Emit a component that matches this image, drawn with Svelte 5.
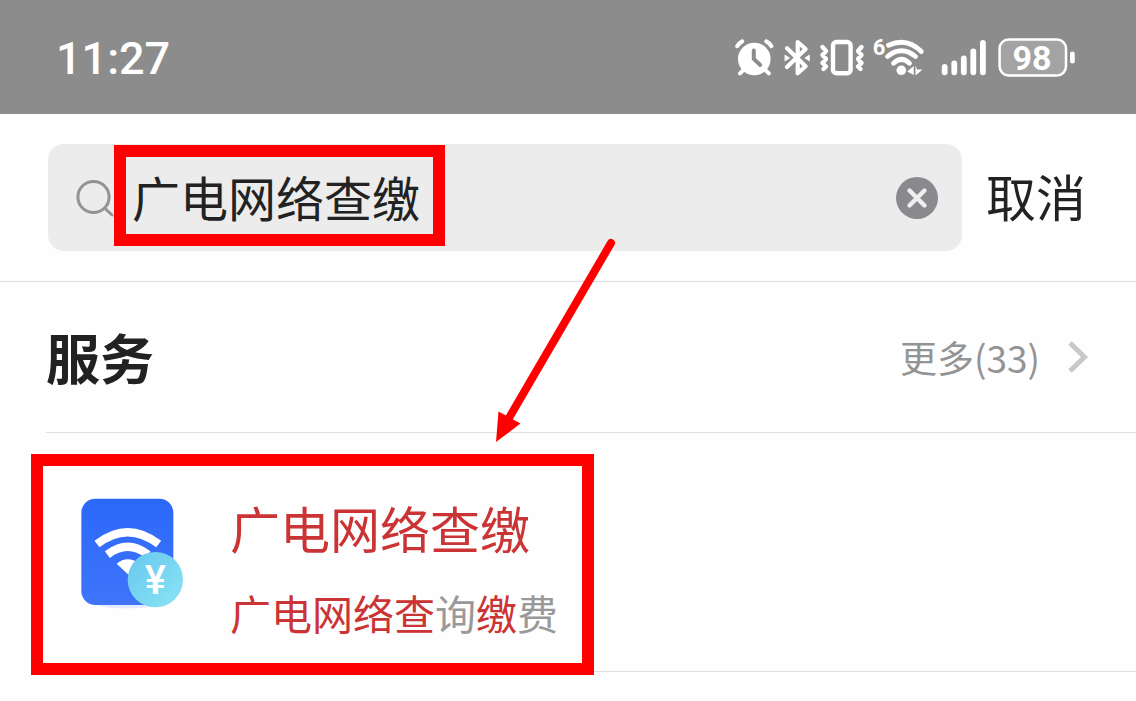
<script>
	let query = '广电网络查缴';
	let searchInput;

	const time = '11:27';
	const battery = 98;
	const total = 33;

	const results = [
		{
			title: [{ text: '广电网络查缴', hit: true }],
			desc: [
				{ text: '广电网络查', hit: true },
				{ text: '询', hit: false },
				{ text: '缴', hit: true },
				{ text: '费', hit: false }
			]
		}
	];

	function clearQuery() {
		query = '';
		searchInput.focus();
	}
</script>

<div class="page">
	<header class="status">
		<time>{time}</time>
		<div class="status-icons">
			<!-- alarm -->
			<svg width="39" height="40" viewBox="0 0 39 40" fill="none" stroke="#fff" stroke-width="4" stroke-linecap="round">
				<circle cx="19.3" cy="22" r="16.3" fill="#fff" stroke="none" />
				<path d="M2.2 9.2Q4 6 7.2 4.4M31.3 4.4Q34.6 6 36.4 9.2M5 36.4l4-4M33.8 36.4l-4-4" />
				<path d="M18.8 13.5V22l6.4 6" stroke="#8c8c8c" />
			</svg>
			<!-- bluetooth -->
			<svg width="26" height="40" viewBox="0 0 26 40" fill="none" stroke="#fff" stroke-width="4.2" stroke-linejoin="round" stroke-linecap="round">
				<path d="M3 11.3l18.6 18-7.9 7V5l7.9 7L3 30" />
				<path d="M.6 17.5v7l5.6-3.5zM25.8 17.5v7l-5.6-3.5z" fill="#fff" stroke="none" />
			</svg>
			<!-- vibrate -->
			<svg width="44" height="40" viewBox="0 0 44 40" fill="none" stroke="#fff" stroke-width="4.4" stroke-linejoin="round" stroke-linecap="round">
				<rect x="13" y="5" width="17.6" height="31.2" rx="3.5" />
				<path d="M2.5 10L6 14l-3.5 4L6 22l-3.5 4L6 29.5 3.5 32M41.5 10L38 14l3.5 4L38 22l3.5 4L38 29.5l2.5 2.5" />
			</svg>
			<!-- wifi 6 -->
			<svg width="50" height="40" viewBox="0 0 50 40" fill="none" stroke="#fff" stroke-width="4.8" stroke-linecap="round">
				<path d="M14.5 8.2Q33 0 47.3 14.5M13.5 19.5Q27.5 8 41.5 19.5M19.5 26.3Q27.5 18.5 35.5 26.3" />
				<circle cx="27.3" cy="33.3" r="4.8" fill="#fff" stroke="none" />
				<path d="M33.2 34.5l6.5-5.5v9zM41.5 38.5v-10l1.5 4h5.5z" fill="#fff" stroke="none" />
				<text x="5" y="18" class="wifi-gen">6</text>
			</svg>
			<!-- signal -->
			<svg width="54" height="40" viewBox="0 0 54 40" fill="#fff">
				<rect x="7.8" y="27" width="5.8" height="11.2" rx="2.9" />
				<rect x="17.4" y="23.6" width="5.8" height="14.6" rx="2.9" />
				<rect x="26.9" y="18.6" width="5.8" height="19.6" rx="2.9" />
				<rect x="36.4" y="11.4" width="5.8" height="26.8" rx="2.9" />
				<rect x="46" y="3" width="5.8" height="35.2" rx="2.9" />
			</svg>
			<!-- battery -->
			<svg width="77" height="40" viewBox="0 0 77 40">
				<rect x="1.6" y="2.4" width="66.4" height="36" rx="9" fill="#a3a3a3" stroke="#fff" stroke-width="2.5" />
				<rect x="72" y="14.6" width="4.8" height="12" rx="2.4" fill="#fff" />
				<text x="34" y="33" class="level">{battery}</text>
			</svg>
		</div>
	</header>

	<form class="search" on:submit|preventDefault>
		<div class="search-box">
			<svg width="38" height="38" viewBox="0 0 38 38" fill="none" stroke="#939393" stroke-width="3" stroke-linecap="round">
				<circle cx="17.5" cy="18" r="15.6" />
				<path d="M29 29.5l7 6.5" />
			</svg>
			<input type="text" aria-label="搜索" bind:this={searchInput} bind:value={query} />
			<button type="button" class="clear" aria-label="清除" on:click={clearQuery}>
				<svg width="42" height="42" viewBox="0 0 42 42">
					<circle cx="21" cy="21" r="21" fill="#8a8a8e" />
					<path d="M13.5 13.5l15 15M28.5 13.5l-15 15" stroke="#efefef" stroke-width="4.4" stroke-linecap="round" />
				</svg>
			</button>
		</div>
		<button type="button" class="cancel">取消</button>
	</form>

	<main>
		<div class="section-head">
			<h2>服务</h2>
			<a class="more" href="#more">
				更多({total})
				<svg width="20" height="32" viewBox="0 0 20 32" fill="none" stroke="#c8c8c8" stroke-width="5">
					<path d="M2 2l14.5 14L2 30" />
				</svg>
			</a>
		</div>

		{#each results as result}
			<a class="result" href="#service">
				<svg width="104" height="114" viewBox="60 50 312 342" fill="none">
					<defs>
						<linearGradient id="tile" x1="0" y1="0" x2="0" y2="1">
							<stop offset="0" stop-color="#2b68fa" />
							<stop offset="1" stop-color="#3f74fa" />
						</linearGradient>
						<linearGradient id="coin" x1="0" y1="0" x2="1" y2="1">
							<stop offset="0" stop-color="#68c8ed" />
							<stop offset="1" stop-color="#8ae4f6" />
						</linearGradient>
					</defs>
					<ellipse cx="200" cy="372" rx="90" ry="12" fill="#e6ebfb" />
					<rect x="64" y="55" width="276" height="319" rx="42" fill="url(#tile)" />
					<path d="M111 191Q203 120 296 191M142 223Q203 176 264 223" stroke="#fff" stroke-width="25" />
					<path d="M170 250Q203 224 238 250L206 284z" fill="#fff" />
					<circle cx="286" cy="298" r="83" fill="url(#coin)" />
					<text x="286" y="341" class="yuan">¥</text>
				</svg>
				<div class="text">
					<h3>
						{#each result.title as part}<span class:hit={part.hit}>{part.text}</span>{/each}
					</h3>
					<p>
						{#each result.desc as part}<span class:hit={part.hit}>{part.text}</span>{/each}
					</p>
				</div>
			</a>
		{/each}
	</main>

	<!-- guide marks drawn over the screen -->
	<svg class="marks" width="640" height="690" viewBox="0 0 640 690" fill="none" stroke="#f00" stroke-width="12" aria-hidden="true">
		<rect x="120" y="151" width="319" height="89" />
		<rect x="37" y="460" width="551" height="209" />
		<path d="M611 243L509 418" stroke-width="8" stroke-linecap="round" />
		<path d="M496 442L498.5 411.5L520.5 423.5z" fill="#f00" stroke="none" />
	</svg>
</div>

<style>
	:global(body) {
		margin: 0;
		background: #fefefe;
	}

	.page {
		position: relative;
		min-height: 100vh;
		font-family: 'Noto Sans CJK SC', 'Noto Sans', sans-serif;
		color: #222;
	}

	svg {
		display: block;
		flex-shrink: 0;
		overflow: visible;
	}

	button {
		padding: 0;
		border: none;
		background: none;
		font: inherit;
		color: inherit;
		cursor: pointer;
	}

	a {
		color: inherit;
		text-decoration: none;
	}

	.status {
		display: flex;
		align-items: center;
		justify-content: space-between;
		padding: 27px 61px 27px 56px;
		background: #8c8c8c;
		color: #fff;
		font-family: Roboto, sans-serif;
	}

	.status time {
		padding-top: 4px;
		font-size: 45px;
		font-weight: 500;
		line-height: 56px;
	}

	.status-icons {
		display: flex;
		gap: 10px;
	}

	.wifi-gen {
		font-size: 22px;
		font-weight: 700;
		fill: #fff;
		stroke: none;
		text-anchor: middle;
	}

	.level {
		font-size: 34px;
		font-weight: 700;
		fill: #fff;
		text-anchor: middle;
	}

	.search {
		display: flex;
		align-items: center;
		gap: 24px;
		padding: 30px 50px 30px 48px;
		border-bottom: 1px solid #dedede;
	}

	.search-box {
		flex: 1;
		display: flex;
		align-items: center;
		gap: 18px;
		min-width: 0;
		padding: 18px 24px 18px 28px;
		border-radius: 16px;
		background: #ececec;
	}

	.search-box input {
		flex: 1;
		box-sizing: border-box;
		min-width: 0;
		height: 71px;
		padding: 0 0 4px;
		border: none;
		outline: none;
		background: none;
		font-family: inherit;
		font-size: 48px;
		line-height: 66px;
		color: #222;
	}

	.cancel {
		padding-bottom: 6px;
		font-size: 50px;
		line-height: 66px;
	}

	.section-head {
		display: flex;
		align-items: center;
		justify-content: space-between;
		margin-left: 46px;
		padding: 35px 48px 35px 0;
		border-bottom: 1px solid #dedede;
	}

	h2,
	h3,
	p {
		margin: 0;
	}

	h2 {
		font-size: 54px;
		font-weight: 700;
		line-height: 80px;
	}

	.more {
		display: flex;
		align-items: center;
		gap: 28px;
		font-size: 37px;
		color: #949494;
	}

	.result {
		display: flex;
		align-items: flex-start;
		gap: 46px;
		margin-left: 46px;
		padding: 64px 48px 34px 34px;
		border-bottom: 1px solid #dedede;
	}

	.yuan {
		font-family: Roboto, sans-serif;
		font-size: 120px;
		font-weight: 500;
		fill: #fff;
		text-anchor: middle;
	}

	.text {
		display: flex;
		flex-direction: column;
		gap: 30px;
	}

	h3 {
		font-size: 50px;
		font-weight: 400;
		line-height: 60px;
	}

	p {
		font-size: 41px;
		line-height: 50px;
		color: #999;
	}

	.hit {
		color: #cb3434;
	}

	.marks {
		position: absolute;
		top: 0;
		left: 0;
		pointer-events: none;
	}
</style>
